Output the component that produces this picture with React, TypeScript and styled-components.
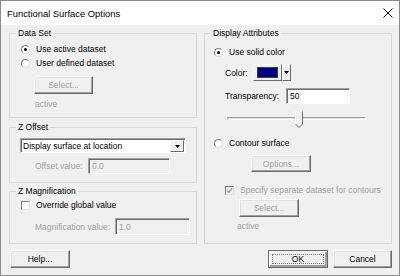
import styled, { createGlobalStyle } from 'styled-components';

const GlobalStyle = createGlobalStyle`
	html, body {
		margin: 0;
		padding: 0;
		background: #ffffff;
	}
	body {
		font-family: "Liberation Sans", Arial, sans-serif;
		font-size: 8.5px;
		color: #000;
	}
`;

const Window = styled.div`
	width: 400px;
	height: 276px;
	box-sizing: border-box;
	border: 1px solid #8a8a8a;
	background: #f0f0f0;
	display: flex;
	flex-direction: column;
`;

const TitleBar = styled.div`
	height: 24px;
	background: #ffffff;
	display: flex;
	align-items: center;
	justify-content: space-between;
	padding: 0 6px 0 6px;
`;

const Title = styled.div`
	font-size: 9.4px;
	line-height: 12px;
	margin-top: 1px;
`;

const Body = styled.div`
	padding: 8px 7px 0 8px;
`;

const Columns = styled.div`
	display: grid;
	grid-template-columns: 188px 188px;
	column-gap: 7px;
`;

const Column = styled.div`
	display: flex;
	flex-direction: column;
`;

const Group = styled.div<{ $h: number; $mt?: number }>`
	position: relative;
	box-sizing: border-box;
	height: ${(p) => p.$h}px;
	margin-top: ${(p) => p.$mt ?? 0}px;
	border: 1px solid #d9d9d9;
	display: flex;
	flex-direction: column;
	align-items: flex-start;
`;

const Legend = styled.span`
	position: absolute;
	top: -6px;
	left: 6px;
	padding: 0 2px;
	background: #f0f0f0;
	line-height: 11px;
`;

const OptionRow = styled.label<{ $mt?: number; $ml?: number; $disabled?: boolean }>`
	display: flex;
	align-items: center;
	gap: 6px;
	height: 14px;
	margin-top: ${(p) => p.$mt ?? 0}px;
	margin-left: ${(p) => p.$ml ?? 0}px;
	color: ${(p) => (p.$disabled ? '#a0a0a0' : '#000')};
	white-space: nowrap;
`;

const Radio = styled.span<{ $on?: boolean }>`
	position: relative;
	width: 9px;
	height: 9px;
	box-sizing: border-box;
	border-radius: 50%;
	border: 1px solid;
	border-color: #7e7e7e #dcdcdc #dcdcdc #7e7e7e;
	background: #ffffff;
	flex: none;
	&::after {
		content: '';
		display: ${(p) => (p.$on ? 'block' : 'none')};
		position: absolute;
		left: 2px;
		top: 2px;
		width: 3px;
		height: 3px;
		border-radius: 50%;
		background: #000;
	}
`;

const Check = styled.span<{ $disabled?: boolean }>`
	width: 9px;
	height: 9px;
	box-sizing: border-box;
	border: 1px solid;
	border-color: #7e7e7e #e3e3e3 #e3e3e3 #7e7e7e;
	background: ${(p) => (p.$disabled ? '#f0f0f0' : '#ffffff')};
	display: flex;
	align-items: center;
	justify-content: center;
	flex: none;
`;

const Button = styled.button<{ $w: number; $h: number; $mt?: number; $ml?: number; $default?: boolean }>`
	position: relative;
	box-sizing: border-box;
	width: ${(p) => p.$w}px;
	height: ${(p) => p.$h}px;
	margin: ${(p) => p.$mt ?? 0}px 0 0 ${(p) => p.$ml ?? 0}px;
	padding: 0;
	font: inherit;
	color: #000;
	background: #f0f0f0;
	border: 1px solid;
	border-color: ${(p) => (p.$default ? '#6a6a6a' : '#ffffff #6a6a6a #6a6a6a #ffffff')};
	box-shadow: ${(p) =>
		p.$default
			? 'inset 1px 1px #ffffff, inset -2px -2px #a0a0a0'
			: 'inset -1px -1px #a0a0a0, inset 1px 1px #e3e3e3'};
	display: flex;
	align-items: center;
	justify-content: center;
	flex: none;
	&:disabled {
		color: #a0a0a0;
	}
	${(p) =>
		p.$default &&
		`&::after {
			content: '';
			position: absolute;
			inset: 3px;
			border: 1px dotted #777;
		}`}
`;

const Note = styled.div<{ $mt: number; $ml: number }>`
	margin: ${(p) => p.$mt}px 0 0 ${(p) => p.$ml}px;
	line-height: 11px;
	color: #a0a0a0;
`;

const FieldRow = styled.div<{ $mt: number; $ml: number; $h: number }>`
	display: flex;
	align-items: center;
	height: ${(p) => p.$h}px;
	margin: ${(p) => p.$mt}px 0 0 ${(p) => p.$ml}px;
`;

const FieldLabel = styled.span<{ $w: number; $disabled?: boolean }>`
	width: ${(p) => p.$w}px;
	flex: none;
	color: ${(p) => (p.$disabled ? '#a0a0a0' : '#000')};
	white-space: nowrap;
`;

const TextBox = styled.div<{ $w: number; $disabled?: boolean }>`
	box-sizing: border-box;
	width: ${(p) => p.$w}px;
	height: 100%;
	border: 1px solid;
	border-color: #a0a0a0 #ffffff #ffffff #a0a0a0;
	box-shadow: inset 1px 1px #6a6a6a;
	background: ${(p) => (p.$disabled ? '#f0f0f0' : '#ffffff')};
	color: ${(p) => (p.$disabled ? '#a0a0a0' : '#000')};
	padding: 0 0 0 3px;
	display: flex;
	align-items: center;
`;

const Combo = styled.div`
	box-sizing: border-box;
	width: 166px;
	height: 15px;
	margin: 10px 0 0 10px;
	border: 1px solid;
	border-color: #a0a0a0 #ffffff #ffffff #a0a0a0;
	box-shadow: inset 1px 1px #6a6a6a;
	background: #ffffff;
	display: flex;
	align-items: center;
	padding: 1px 1px 0 2px;
`;

const ComboText = styled.span`
	flex: 1;
`;

const ArrowBox = styled.span<{ $w: number }>`
	box-sizing: border-box;
	width: ${(p) => p.$w}px;
	height: 100%;
	background: #f0f0f0;
	border: 1px solid;
	border-color: #ffffff #6a6a6a #6a6a6a #ffffff;
	display: flex;
	align-items: center;
	justify-content: center;
	flex: none;
`;

const ColorPicker = styled.div`
	display: flex;
	height: 17px;
`;

const SwatchBox = styled.span`
	box-sizing: border-box;
	width: 29px;
	height: 100%;
	padding: 2px 3px;
	background: #f0f0f0;
	border: 1px solid;
	border-color: #ffffff #6a6a6a #6a6a6a #ffffff;
	display: flex;
`;

const Swatch = styled.span<{ $color: string }>`
	flex: 1;
	background: ${(p) => p.$color};
	border: 1px solid #404040;
`;

const Slider = styled.div`
	position: relative;
	width: 139px;
	height: 22px;
	margin: 3px 0 0 22px;
`;

const Groove = styled.div`
	position: absolute;
	left: 0;
	right: 0;
	top: 10px;
	height: 3px;
	box-sizing: border-box;
	border: 1px solid;
	border-color: #a0a0a0 #ffffff #ffffff #a0a0a0;
	background: #e3e3e3;
`;

const Thumb = styled.svg`
	position: absolute;
	top: 4px;
`;

const ButtonRow = styled.div`
	display: flex;
	margin-top: 6px;
	padding-left: 1px;
	gap: 5px;
`;

const Spacer = styled.div`
	flex: 1;
`;

function DownArrow() {
	return (
		<svg width='5' height='3' viewBox='0 0 5 3'>
			<path d='M0 0H5L2.5 3Z' fill='#000' />
		</svg>
	);
}

function App() {
	const transparency = 50;
	return (
		<>
			<GlobalStyle />
			<Window>
				<TitleBar>
					<Title>Functional Surface Options</Title>
					<svg width='10' height='10' viewBox='0 0 10 10'>
						<path d='M0.5 0.5L9.5 9.5M9.5 0.5L0.5 9.5' stroke='#000' strokeWidth='1' />
					</svg>
				</TitleBar>
				<Body>
					<Columns>
						<Column>
							<Group $h={85}>
								<Legend>Data Set</Legend>
								<OptionRow $mt={8} $ml={11}>
									<Radio $on />
									Use active dataset
								</OptionRow>
								<OptionRow $ml={11}>
									<Radio />
									User defined dataset
								</OptionRow>
								<Button $w={59} $h={18} $mt={6} $ml={24} disabled>
									Select...
								</Button>
								<Note $mt={5} $ml={25}>active</Note>
							</Group>
							<Group $h={56} $mt={9}>
								<Legend>Z Offset</Legend>
								<Combo>
									<ComboText>Display surface at location</ComboText>
									<ArrowBox $w={14}>
										<DownArrow />
									</ArrowBox>
								</Combo>
								<FieldRow $mt={5} $ml={25} $h={16}>
									<FieldLabel $w={53} $disabled>
										Offset value:
									</FieldLabel>
									<TextBox $w={82} $disabled>
										0.0
									</TextBox>
								</FieldRow>
							</Group>
							<Group $h={53} $mt={8}>
								<Legend>Z Magnification</Legend>
								<OptionRow $mt={6} $ml={11}>
									<Check />
									Override global value
								</OptionRow>
								<FieldRow $mt={6} $ml={25} $h={17}>
									<FieldLabel $w={80} $disabled>
										Magnification value:
									</FieldLabel>
									<TextBox $w={75} $disabled>
										1.0
									</TextBox>
								</FieldRow>
							</Group>
						</Column>
						<Column>
							<Group $h={211}>
								<Legend>Display Attributes</Legend>
								<OptionRow $mt={11} $ml={9}>
									<Radio $on />
									Use solid color
								</OptionRow>
								<FieldRow $mt={5} $ml={20} $h={17}>
									<FieldLabel $w={28}>Color:</FieldLabel>
									<ColorPicker>
										<SwatchBox>
											<Swatch $color='#000080' />
										</SwatchBox>
										<ArrowBox $w={9}>
											<DownArrow />
										</ArrowBox>
									</ColorPicker>
								</FieldRow>
								<FieldRow $mt={7} $ml={20} $h={16}>
									<FieldLabel $w={61}>Transparency:</FieldLabel>
									<TextBox $w={64}>{transparency}</TextBox>
								</FieldRow>
								<Slider>
									<Groove />
									<Thumb
										width='8'
										height='18'
										viewBox='0 0 8 18'
										style={{ left: `${Math.round((139 - 8) * (transparency / 100)) + 2}px` }}
									>
										<path d='M0.5 0.5H7.5V13L4 16.5L0.5 13Z' fill='#f0f0f0' />
										<path d='M0.5 13V0.5H7' fill='none' stroke='#ffffff' />
										<path d='M7.5 0.5V13L4 16.5L0.5 13' fill='none' stroke='#6a6a6a' />
									</Thumb>
								</Slider>
								<OptionRow $mt={7} $ml={9}>
									<Radio />
									Contour surface
								</OptionRow>
								<Button $w={60} $h={17} $mt={5} $ml={46} disabled>
									Options...
								</Button>
								<OptionRow $mt={11} $ml={20} $disabled>
									<Check $disabled>
										<svg width='7' height='7' viewBox='0 0 7 7'>
											<path d='M1 3.5L2.8 5.3L6 1.5' fill='none' stroke='#a0a0a0' strokeWidth='1.4' />
										</svg>
									</Check>
									Specify separate dataset for contours
								</OptionRow>
								<Button $w={60} $h={18} $mt={2} $ml={34} disabled>
									Select...
								</Button>
								<Note $mt={4} $ml={32}>active</Note>
							</Group>
						</Column>
					</Columns>
					<ButtonRow>
						<Button $w={60} $h={18}>
							Help...
						</Button>
						<Spacer />
						<Button $w={60} $h={18} $default>
							OK
						</Button>
						<Button $w={59} $h={18}>
							Cancel
						</Button>
					</ButtonRow>
				</Body>
			</Window>
		</>
	);
}

export default App;
